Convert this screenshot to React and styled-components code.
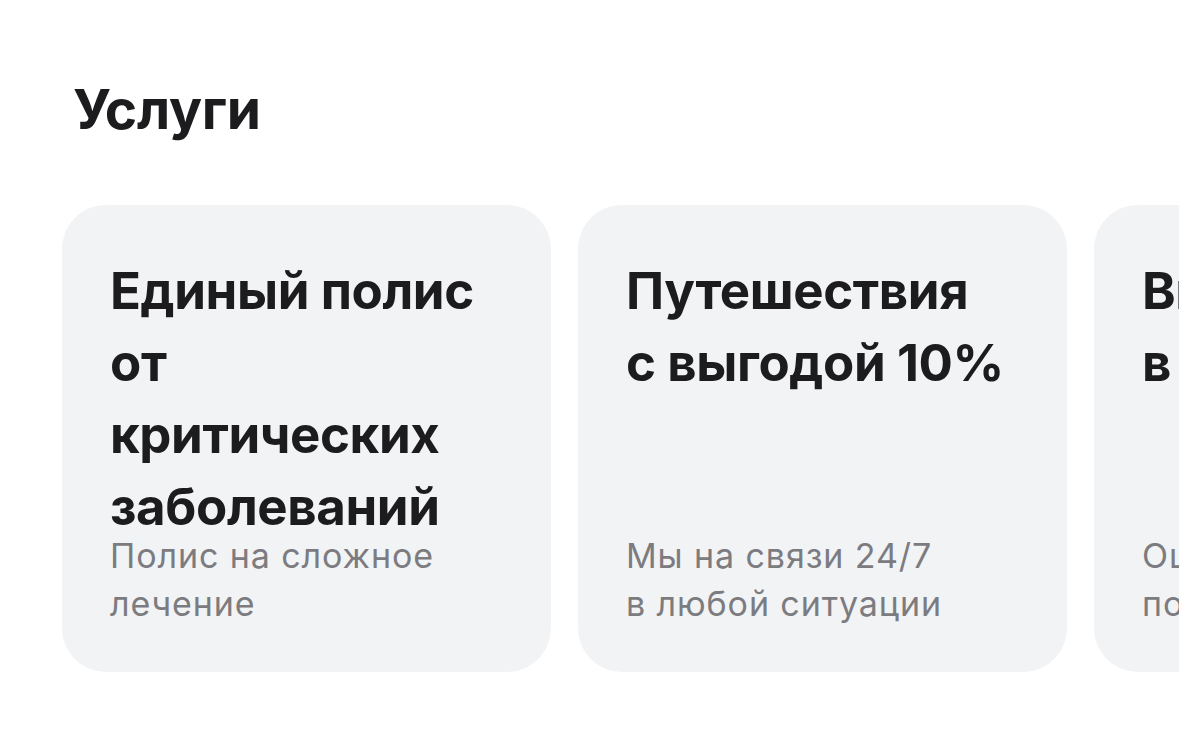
import React from 'react'
import styled, { createGlobalStyle } from 'styled-components'

const GlobalStyle = createGlobalStyle`
	html, body {
		margin: 0;
		padding: 0;
		background: #ffffff;
	}
	body {
		font-family: Inter, "Noto Sans", "Liberation Sans", sans-serif;
		-webkit-font-smoothing: antialiased;
	}
`

const Page = styled.main`
	width: 1179px;
	height: 753px;
	overflow: hidden;
	box-sizing: border-box;
	padding: 71px 0 0 62px;
`

const Title = styled.h1`
	margin: 0 0 58px 11px;
	font-size: 55px;
	line-height: 76px;
	font-weight: 700;
	letter-spacing: -0.3px;
	color: #1c1c1e;
`

const Row = styled.div`
	display: flex;
	gap: 27px;
`

const Card = styled.article`
	flex: 0 0 489px;
	height: 467px;
	box-sizing: border-box;
	padding: 50px 48px 44px;
	border-radius: 44px;
	background: #f2f3f5;
	display: grid;
	grid-template-rows: minmax(0, 1fr) auto;
`

const CardTitle = styled.h2`
	margin: 0;
	font-size: 51px;
	line-height: 72px;
	font-weight: 700;
	letter-spacing: -0.4px;
	color: #1c1c1e;
	white-space: nowrap;

	span {
		display: block;
	}
`

const CardText = styled.p`
	margin: 0;
	font-size: 34px;
	line-height: 48px;
	font-weight: 400;
	letter-spacing: 0.9px;
	color: #7c7c80;
	white-space: nowrap;

	span {
		display: block;
	}
`

const services = [
	{
		title: ['Единый полис', 'от', 'критических', 'заболеваний'],
		text: ['Полис на сложное', 'лечение'],
	},
	{
		title: ['Путешествия', 'с выгодой 10%'],
		text: ['Мы на связи 24/7', 'в любой ситуации'],
	},
	{
		title: ['Выплаты', 'в срок'],
		text: ['Оценка ущерба', 'по фото'],
	},
]

const App = () => {
	return (
		<>
			<GlobalStyle />
			<Page>
				<Title>Услуги</Title>
				<Row>
					{services.map((s, ind) => (
						<Card key={ind}>
							<CardTitle>
								{s.title.map((line, i) => (
									<span key={i}>{line}</span>
								))}
							</CardTitle>
							<CardText>
								{s.text.map((line, i) => (
									<span key={i}>{line}</span>
								))}
							</CardText>
						</Card>
					))}
				</Row>
			</Page>
		</>
	)
}

export default App
